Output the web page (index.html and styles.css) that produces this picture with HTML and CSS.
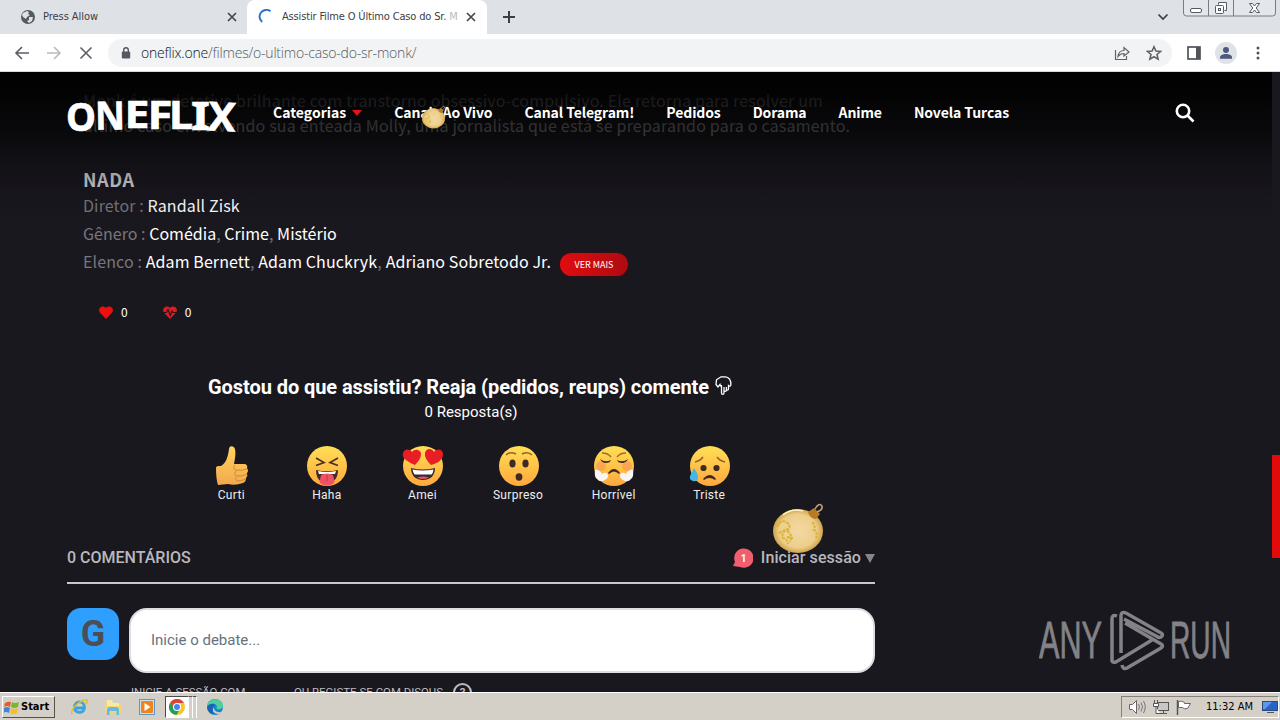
FILE: index.html
```html
<!DOCTYPE html>
<html lang="pt">
<head>
<meta charset="utf-8">
<title>Assistir Filme O Último Caso do Sr. Monk</title>
<link rel="stylesheet" href="styles.css">
</head>
<body>
<div class="screen">
  <div class="tabs">
    <div class="tab idle">
      <svg class="fav" viewBox="0 0 16 16"><circle cx="8" cy="8" r="7" fill="#555a60"/><path d="M3 4l4-2 2 1-1 2 2 1-3 2-1 2-3-2-1-2zM9 8h4l-1 4-3 2-2-2 2-1z" fill="#dee1e6"/></svg>
      <span class="tab-title press">Press Allow</span>
      <svg class="x" viewBox="0 0 10 10"><path d="M1 1l8 8M9 1L1 9"/></svg>
    </div>
    <div class="tab active">
      <svg class="fav spin" viewBox="0 0 16 16"><path d="M12.500 2.300A6.200 6.200 0 0 0 4.200 13" fill="none" stroke="#2f6fd0" stroke-width="2"/></svg>
      <span class="tab-title film">Assistir Filme O Último Caso do Sr. <i>M</i></span>
      <svg class="x" viewBox="0 0 10 10"><path d="M1 1l8 8M9 1L1 9"/></svg>
    </div>
    <svg class="plus" viewBox="0 0 12 12"><path d="M6 0v12M0 6h12"/></svg>
    <svg class="chev" viewBox="0 0 12 8"><path d="M1.500 1.500L6 6l4.500-4.500"/></svg>
    <svg class="winbtns" width="94" height="17" viewBox="0 0 94 17"><path d="M.5 0v13q0 3 3 3h86q3 0 3-3V0M25.500 0v16M50.500 0v16" fill="#e3e6eb" stroke="#777c85"/><rect x="7.500" y="8.500" width="11" height="4" rx="1.500" fill="#fff" stroke="#555a62"/><path d="M35.500 4.500v-2h8v8h-2" fill="#fff" stroke="#555a62"/><rect x="32.500" y="5.500" width="8" height="8" rx="1" fill="#fff" stroke="#555a62"/><rect x="35.500" y="8.500" width="2" height="2" fill="none" stroke="#555a62"/><path d="M66.500 3.500h3l2 2.500 2-2.500h3l-3.300 4.500 3.300 4.500h-3l-2-2.500-2 2.500h-3l3.300-4.500z" fill="#fff" stroke="#555a62"/></svg>
  </div>
  <div class="toolbar">
    <svg class="nav-ic" viewBox="0 0 16 16"><path d="M15 8H2M8 2L2 8l6 6" stroke="#5a5e63"/></svg>
    <svg class="nav-ic" viewBox="0 0 16 16"><path d="M1 8h13M8 2l6 6-6 6" stroke="#b9bbbe"/></svg>
    <svg class="nav-ic" viewBox="0 0 16 16"><path d="M2.500 2.500l11 11M13.500 2.500l-11 11" stroke="#5a5e63"/></svg>
    <div class="omni">
      <svg class="lock" viewBox="0 0 10 14"><path d="M2.700 6V4a2.300 2.300 0 0 1 4.600 0v2" fill="none" stroke="#55595f" stroke-width="1.400"/><rect x=".8" y="5.500" width="8.400" height="7" rx="1" fill="#55595f"/></svg>
      <span class="url"><b>oneflix.one</b>/filmes/o-ultimo-caso-do-sr-monk/</span>
      <svg class="share" viewBox="0 0 16 16"><path d="M1.500 5v9.500h11V11M4 11.500c.5-4 2.500-6 6-6V2.500l5 4.500-5 4V8.500c-3 0-4.500 1-6 3z"/></svg>
      <svg class="star" viewBox="0 0 16 16"><path d="M8 1.800l1.900 4.300 4.600.4-3.500 3 1.100 4.600L8 11.700l-4.100 2.400L5 9.500l-3.500-3 4.600-.4z"/></svg>
    </div>
    <svg class="panel" viewBox="0 0 14 14"><rect x="1" y="1" width="12" height="12" fill="none" stroke="#50535a" stroke-width="1.700"/><path d="M9 1h4v12H9z" fill="#50535a"/></svg>
    <svg class="user" viewBox="0 0 22 22"><circle cx="11" cy="11" r="11" fill="#dfe2e7"/><circle cx="11" cy="8" r="3" fill="#4b597b"/><path d="M5 16.800v-1.500c0-2 3-3.300 6-3.300s6 1.300 6 3.300v1.500z" fill="#4b597b"/></svg>
    <svg class="dots" viewBox="0 0 4 14"><circle cx="2" cy="2" r="1.500"/><circle cx="2" cy="7" r="1.500"/><circle cx="2" cy="12" r="1.500"/></svg>
  </div>

  <div class="page">
    <div class="details">
      <p class="desc"><span class="d1">Monk é um detetive brilhante com transtorno obsessivo-compulsivo. Ele retorna para resolver um</span><br><span class="d2">último caso envolvendo sua enteada Molly, uma jornalista que está se preparando para o casamento.</span></p>
      <div class="nada">NADA</div>
      <div class="meta m1">Diretor : <b>Randall Zisk</b></div>
      <div class="meta m2">Gênero : <b>Comédia</b>, <b>Crime</b>, <b>Mistério</b></div>
      <div class="meta m3"><span class="cast">Elenco : <b>Adam Bernett</b>, <b>Adam Chuckryk</b>, <b>Adriano Sobretodo Jr.</b></span><button class="more">VER MAIS</button></div>
      <div class="votes">
        <svg viewBox="0 0 14 13"><path d="M7 13L1 6.800C-2 3 3-2 7 2c4-4 9 1 6 4.800z" fill="#ee0f0f"/></svg><span>0</span>
        <svg class="second" viewBox="0 0 14 13"><path d="M7 13L1 6.800C-2 3 3-2 7 2c4-4 9 1 6 4.800z" fill="#e01b20"/><path d="M0 6.500h3.500L5 3.500l2.300 6L9 5l1 1.500h4" fill="none" stroke="#1a181f" stroke-width="1.100"/></svg><span>0</span>
      </div>
    </div>

    <div class="comments">
      <h3><span>Gostou do que assistiu? Reaja (pedidos, reups) comente</span><svg viewBox="0 0 18 20"><path d="M7.500 10v8q0 1.300 1.200 1.300t1.300-1.300V12m0 0v3.300q0 1 1.200 1t1.200-1V12m0 2.800q2.100.8 2.100-1V10.500q2 1.500 2.300-.500c.5-5-2-8.200-5.500-8.200H7L2.500 4.800 2 9.500l2 2.500L6 9.500q.500 2 1.500 2"/></svg></h3>
      <div class="resp">0 Resposta(s)</div>
      <div class="reactions">
        <div class="re"><svg viewBox="0 0 40 40"><defs><linearGradient id="y" x2="0" y2="1"><stop stop-color="#ffdf57"/><stop offset="1" stop-color="#ffa83c"/></linearGradient><linearGradient id="t" x2="0" y2="1"><stop stop-color="#ffd45e"/><stop offset="1" stop-color="#f2a94d"/></linearGradient></defs><path d="M4 22c0-2 2-2 5-2 5-3 7-9 8-17 .5-4 5-3 6 0 1 5 0 9-1 15h11q3 1 2 4 2 3 0 5 1 3-1 5 0 4-3 5-8 3-15 1l-10 1q-2-6-2-17z" fill="url(#t)"/><path d="M23 19q-3 2 0 5 7 1 12-1M24 25q-3 3 0 5 6 1 11-2M24 31q-1 3 1 4 5 0 9-2" fill="none" stroke="#c98534" stroke-width=".9"/></svg><span>Curti</span></div>
        <div class="re"><svg viewBox="0 0 40 40"><circle cx="20" cy="20" r="20" fill="url(#y)"/><path d="M9 12l8 4.500-8 3M31 12l-8 4.500 8 3" fill="none" stroke="#4b3022" stroke-width="1.700"/><path d="M9 24q11 2.500 22 0c0 8-4 13-11 13S9 32 9 24z" fill="#442b2b"/><path d="M11 25q9 2 18 0l-1 3H12z" fill="#fff"/><path d="M14 29q6-3 12 0l1.500 7c-2 4.500-13 4.500-15 0z" fill="#ef5262"/><path d="M20 29v6" stroke="#bb3448"/></svg><span>Haha</span></div>
        <div class="re"><svg viewBox="0 0 40 40"><circle cx="20" cy="20" r="20" fill="url(#y)"/><path d="M12 19Q0 14-.300 9C0 3 6 2 9 6c3-4 9-2 9 2s-3 8-6 11zM28 19q-7-7-6-12c1-5 7-5 9-1 3-4 9-3 9 2 0 6-5 9-12 11z" fill="#e81d25"/><path d="M8 22q12 3 24 0c0 7-4 12-12 12S8 29 8 22z" fill="#3a282c"/><path d="M9.500 23.500q10 2 21 0-.5 4-2 5h-17q-1.500-2-2-5z" fill="#fff"/><path d="M14 31.500q6-2 12 0-6 3-12 0z" fill="#e35468"/></svg><span>Amei</span></div>
        <div class="re"><svg viewBox="0 0 40 40"><circle cx="20" cy="20" r="20" fill="url(#y)"/><path d="M7 9q4-4 10-1M23 8q6-3 10 1" fill="none" stroke="#96602d" stroke-width="1.500"/><ellipse cx="13.500" cy="17.500" rx="3.100" ry="4" fill="#3d2b24"/><ellipse cx="26.500" cy="17.500" rx="3.100" ry="4" fill="#3d2b24"/><ellipse cx="20" cy="31" rx="3.400" ry="3.700" fill="#3d2b24"/></svg><span>Surpreso</span></div>
        <div class="re"><svg viewBox="0 0 40 40"><circle cx="20" cy="20" r="20" fill="url(#y)"/><circle cx="7" cy="20" r="5" fill="#f59255" opacity=".6"/><circle cx="33" cy="20" r="5" fill="#f59255" opacity=".6"/><path d="M8 7q6 0 9 4M32 7q-6 0-9 4" fill="none" stroke="#a36a2a" stroke-width="1.400"/><path d="M6 13q5 4 11 1-1 3-5 3t-6-4M34 13q-5 4-11 1 1 3 5 3t6-4" fill="#3d2b24"/><path d="M14 27q6-8 12 0l-1 1q-5-5-10 0z" fill="#3d2b24"/><path d="M13 27q-3-1-5 1-3-5-7-4-1 7 2 9 3 4 8 1 5-3 2-7zM27 27q3-1 5 1 3-5 7-4 1 7-2 9-3 4-8 1-5-3-2-7z" fill="#f8f5f4"/></svg><span>Horrível</span></div>
        <div class="re"><svg viewBox="0 0 40 40"><circle cx="20" cy="20" r="20" fill="url(#y)"/><path d="M5 16q5-1 8-5M35 16q-5-1-8-5" fill="none" stroke="#96602d" stroke-width="1.500"/><circle cx="13.500" cy="22" r="3.100" fill="#3d2b24"/><circle cx="26.500" cy="22" r="3.100" fill="#3d2b24"/><path d="M13 33q7-8 13 0l-1 1q-6-4-11 0z" fill="#3d2b24"/><path d="M4 22q5 7 4 10-1 4-5 3-4-1-3-5z" fill="#48b5e8"/></svg><span>Triste</span></div>
      </div>
      <div class="bar">
        <span class="count">0 COMENTÁRIOS</span>
        <svg class="bubble" viewBox="0 0 20 20"><path d="M0 18l2-4A9.700 9.700 0 1 1 7 19z" fill="#f05f70"/><text x="10.500" y="13.500" text-anchor="middle">1</text></svg>
        <span class="login">Iniciar sessão</span><i class="tri"></i>
      </div>
      <div class="compose"><div class="avatar">G</div><div class="field">Inicie o debate...</div></div>
      <div class="signin"><span class="s1">INICIE A SESSÃO COM</span><span class="s2">OU REGISTE-SE COM DISQUS</span><span class="q">?</span></div>
    </div>

    <div class="site-head">
      <svg class="logo" width="170" height="40" viewBox="0 0 170 40"><text x="-1" y="35" textLength="30" lengthAdjust="spacingAndGlyphs" font-size="40">O</text><text x="28" y="33.500" textLength="30" lengthAdjust="spacingAndGlyphs" font-size="39" transform="rotate(-1 43 20)">N</text><text x="57.500" y="32" textLength="25" lengthAdjust="spacingAndGlyphs" font-size="38">E</text><text x="80.500" y="32.500" textLength="25" lengthAdjust="spacingAndGlyphs" font-size="39">F</text><text x="102" y="32.500" textLength="24" lengthAdjust="spacingAndGlyphs" font-size="39">L</text><text x="124" y="33.500" textLength="19" lengthAdjust="spacingAndGlyphs" font-size="39">I</text><text x="141" y="35" textLength="28" lengthAdjust="spacingAndGlyphs" font-size="40" transform="rotate(3 155 20)">X</text></svg>
      <nav><a class="cat">Categorias<i></i></a><a>Canais Ao Vivo</a><a>Canal Telegram!</a><a>Pedidos</a><a>Dorama</a><a>Anime</a><a>Novela Turcas</a></nav>
      <svg class="search" viewBox="0 0 20 20"><circle cx="8" cy="8" r="6.200"/><path d="M12.500 12.500L18.500 18.500"/></svg>
    </div>

    <svg class="orn small" viewBox="0 0 50 50"><use href="#ball"/></svg>
    <svg class="orn big" viewBox="0 0 50 50"><defs><radialGradient id="g"><stop stop-color="#f2d8a4"/><stop offset=".75" stop-color="#edcf8b"/><stop offset="1" stop-color="#cfa24c"/></radialGradient></defs><g id="ball"><ellipse cx="25" cy="27" rx="25" ry="22" fill="url(#g)"/><path d="M4 23q4-8 9-5t3 7q-6 1-7 8m5-6q6 3 3 11M9 34q5 0 6 6M39 18q4 3 2 8 4 1 2 8M6 29l8-4m0 8l6 1" fill="none" stroke="#d9b536" stroke-width="2" stroke-dasharray="3 1"/><path d="M10 11Q19 4 30 7" fill="none" stroke="#fff1bd" stroke-width="1.500"/><path d="M35 8l6-4 6 6-4 5q-6 0-8-7z" fill="#b77b24"/><path d="M42 5q4-7 7-3 1 4-5 6" fill="none" stroke="#bfa577" stroke-width="1.500"/></g></svg>

    <svg class="watermark" width="194" height="64" viewBox="0 0 194 64"><text x="0" y="49" textLength="63" lengthAdjust="spacingAndGlyphs">ANY</text><text x="131" y="49" textLength="61" lengthAdjust="spacingAndGlyphs">RUN</text><path d="M78 7q-5-2-5 3v42q1 2 4 1l36-22M82 44V7q0-5 5-3l35 20q3 2 0 4-2 1-4-.500L85 10M83 56q1 5 5 3l34-20q3-2 0-4L86 14"/></svg>
    <i class="scroll"></i>
  </div>

  <div class="taskbar">
    <div class="start"><svg viewBox="0 0 16 16"><path d="M1 4q3-2 6-1L6 8Q3 6 0 8z" fill="#e45b2c"/><path d="M8 3q3 2 7 0l-1 5q-4 2-7 0z" fill="#77b82d"/><path d="M0 9q3-2 6 0l-1 5q-3-2-6 0z" fill="#3b86d8"/><path d="M7 9q3 2 7 0l-1 5q-4 2-7 0z" fill="#f6bd28"/></svg><b>Start</b></div>
    <svg class="app ie" viewBox="0 0 18 18"><path d="M4.500 10h10c0-8-10-8-10-.500 0 6 8 6 9.500 2" fill="none" stroke="#3ba3de" stroke-width="2.800"/><path d="M2 16C0 11 11 1 17 2q1 2-2 5" fill="none" stroke="#e3bd31" stroke-width="1.500"/></svg>
    <svg class="app folder" viewBox="0 0 18 18"><path d="M1 3h6l1 2h9v10H1z" fill="#f1d679"/><path d="M3 2h5l1 3h6v3H3z" fill="#f9e9a6"/><path d="M3 17v-5q0-3 3-3h6q3 0 3 3v5h-2.500v-4h-7v4z" fill="#68b9dd"/></svg>
    <svg class="app media" viewBox="0 0 18 18"><rect x="1.500" y="1.500" width="15" height="15" fill="#cce2f2" stroke="#5c97c9"/><rect x="3" y="3" width="12" height="12" rx="1" fill="#ef8519"/><path d="M6.500 5l6 4-6 4z" fill="#fff"/></svg>
    <div class="chrome"><svg viewBox="0 0 16 16"><circle cx="8" cy="8" r="8" fill="#f7c62d"/><path d="M1 4a8 8 0 0 1 14 0H8L5 9z" fill="#db4437"/><path d="M1 4a8 8 0 0 0 6.500 12L11 9.700 5 9z" fill="#279c55"/><circle cx="8" cy="8" r="4" fill="#fff"/><circle cx="8" cy="8" r="3" fill="#4285f4"/></svg></div><i class="stack"></i><i class="stack"></i>
    <svg class="app edge" viewBox="0 0 18 18"><circle cx="9" cy="9" r="8" fill="#1686d0"/><path d="M1 8C2-1 17-1 17 8q-1 4-6 3-1-1 0-2-1-4-5-3-3 0-5 2z" fill="#4fcf9c"/><path d="M7 9q-2 6 5 7 3 0 4-2-6 1-8-3z" fill="#d6cfc6"/><path d="M2 8q4-4 7-1-4 3-1 9Q2 16 1 9z" fill="#1b63b4"/></svg>
    <div class="tray">
      <svg viewBox="0 0 18 16"><path d="M1.500 5.500h3l4-4v13l-4-4h-3z" fill="#fff" stroke="#666"/><path d="M10.500 5q2 3 0 6M13 3.500q3 4.500 0 9M15.500 2q3.500 6 0 12" fill="none" stroke="#777"/></svg>
      <svg class="net" viewBox="0 0 18 16"><rect x="5.500" y="3.500" width="11" height="8" fill="#c7c7c7" stroke="#555"/><path d="M8 14.500h7M11.500 12v2M2.500 1v3m3-3v3M1.500 4.500h5v3h-5zM4 8v6.500h4" fill="#fff" stroke="#555"/></svg>
      <svg class="flag" viewBox="0 0 18 16"><path d="M2.500 1v15" stroke="#555" stroke-width="1.500"/><path d="M3.500 2.500q3-1 6 1v1h6l-3 5q-4 1-5-1H3.500z" fill="#fff" stroke="#666"/></svg>
      <span>11:32 AM</span>
      <svg class="mon" viewBox="0 0 16 16"><rect x=".5" y="2.500" width="15" height="9" fill="#2864c7" stroke="#294b86"/><path d="M1 3h9L3 10H1z" fill="#5e99e6"/><path d="M5 13.500h7" stroke="#555"/></svg>
    </div>
  </div>
</div>
</body>
</html>
```
FILE: styles.css
```css
* { box-sizing: border-box; }
body { margin: 0; background: #1a181f; }
svg { flex: none; display: block; }
.screen { width: 1280px; height: 720px; display: flex; flex-direction: column; overflow: hidden; font-family: Roboto, sans-serif; }

.tabs { height: 34px; flex: none; background: #dee1e6; display: flex; align-items: center; font: 11px/14px "DejaVu Sans Condensed", "DejaVu Sans", sans-serif; font-stretch: condensed; color: #3c4043; }
.tab { display: flex; align-items: center; height: 34px; }
.idle { width: 247px; padding: 0 10px 0 20px; }
.active { width: 240px; padding: 0 11px 0 11px; background: #fff; border-radius: 8px 8px 0 0; }
.fav { width: 16px; height: 16px; }
.tab-title { margin-left: 7px; white-space: nowrap; flex: 1; overflow: hidden; }
.film { margin-left: 8px; letter-spacing: -.16px; }
.film i { font-style: normal; color: #bbb; }
.press { letter-spacing: -.05px; }
.x { width: 10px; height: 10px; fill: none; stroke: #45484d; stroke-width: 1.7; }
.plus { width: 12px; height: 12px; margin-left: 16px; stroke: #3c4043; stroke-width: 2; }
.chev { width: 12px; height: 8px; margin-left: auto; fill: none; stroke: #3c4043; stroke-width: 1.7; }
.winbtns { align-self: flex-start; margin: 0 3px 0 14px; }

.toolbar { height: 38px; flex: none; display: flex; align-items: center; background: #fff; border-bottom: 1px solid #d5d7da; padding: 0 20px 0 14px; }
.nav-ic { width: 16px; height: 16px; margin-right: 16px; fill: none; stroke-width: 1.6; }
.omni { width: 1064px; height: 28px; margin-left: -2px; border-radius: 14px; background: #f1f3f4; display: flex; align-items: center; padding: 0 10px 0 13px; }
.lock { width: 10px; height: 14px; }
.url { margin-left: 10px; font: 300 14px/20px "Open Sans", sans-serif; color: #55595f; letter-spacing: -.2px; flex: 1; }
.url b { font-weight: 300; color: #101214; }
.share, .star { width: 16px; height: 16px; fill: none; stroke: #5f6368; stroke-width: 1.2; }
.star { margin-left: 16px; stroke-width: 1.6; }
.panel { width: 14px; height: 14px; margin-left: 15px; }
.user { width: 22px; height: 22px; margin-left: 14px; }
.dots { width: 4px; height: 14px; margin-left: auto; fill: #50535a; }

.page { position: relative; height: 620px; flex: none; overflow: hidden; background: #1a181f; }
.details { height: 284px; padding: 16px 0 0 83px; color: #77767c; font-family: "Noto Sans CJK JP", sans-serif; white-space: nowrap; }
.desc { margin: 0; font-size: 16px; line-height: 25px; color: #98979d; }
.d1 { letter-spacing: .18px; }
.d2 { letter-spacing: .19px; }
.nada { margin-top: 28px; font-size: 18px; font-weight: 700; line-height: 26px; letter-spacing: .6px; color: #d6d5d9; }
.meta { height: 28px; font-size: 16px; line-height: 28px; letter-spacing: .11px; display: flex; white-space: pre; }
.nada + .meta { margin-top: -1px; }
.m2 { letter-spacing: .03px; }
.meta b { font-weight: 400; color: #fff; }
.more { width: 68px; height: 23px; margin: 6px 0 0 9px; padding: 0; border: 0; border-radius: 12px; background: linear-gradient(90deg, #e00c10, #ad0b10); color: #fff; font: 9px/22px "Noto Sans CJK JP", sans-serif; box-shadow: 0 0 3px #500a10; }
.votes { display: flex; align-items: center; margin: 27px 0 0 16px; height: 20px; font: 12px/20px "Noto Sans CJK JP", sans-serif; color: #fff; }
.votes svg { width: 14px; height: 13px; margin-right: 8px; }
.votes .second { margin-left: 35px; }

.comments { width: 808px; margin-left: 67px; color: #fff; }
h3 { margin: 0; padding: 20px 2px 0 0; height: 45px; display: flex; justify-content: center; font: 700 20px/23px Roboto, sans-serif; letter-spacing: -.07px; }
h3 svg { width: 18px; height: 20px; margin: -1px 0 0 5px; fill: none; stroke: #fff; stroke-width: 1.3; }
.resp { height: 22px; font-size: 15px; line-height: 22px; text-align: center; }
.reactions { display: flex; margin: 23px 0 0 117px; }
.re { width: 95.6px; display: flex; flex-direction: column; align-items: center; font-size: 12px; line-height: 18px; letter-spacing: .3px; color: #eee; }
.re svg { width: 40px; height: 40px; overflow: visible; }
.re span { margin-right: 1px; }
.bar { display: flex; align-items: center; height: 54px; margin-top: 26px; padding-top: 4px; border-bottom: 2px solid #c9c8cc; color: #b9b8bc; font: 500 16px/24px Roboto, sans-serif; }
.bubble { width: 20px; height: 20px; margin: -1px 0 0 auto; }
.bubble text { font: 700 10px Roboto, sans-serif; fill: #fff; }
.login { margin-left: 8px; letter-spacing: .07px; }
.tri { margin-left: 4px; border: 5px solid transparent; border-top: 9px solid #86858b; border-bottom: 0; }
.compose { display: flex; margin-top: 24px; }
.avatar { width: 52px; height: 52px; border-radius: 14px; background: #2e9fff; color: #4b4f55; font: 700 36px/52px Roboto, sans-serif; text-align: center; }
.field { width: 746px; height: 65px; margin-left: 10px; border: 2px solid #dbdfe4; border-radius: 18px; background: #fff; color: #66727d; font-size: 15px; line-height: 60px; padding-left: 20px; }
.signin { display: flex; margin: 10px 0 0 64px; height: 20px; font-size: 11.4px; line-height: 18px; color: #bbbabe; white-space: nowrap; }
.s1 { width: 163px; }
.q { width: 19px; height: 19px; margin-left: 10px; border: 2px solid #bbbabe; border-radius: 50%; text-align: center; line-height: 15px; font-weight: 700; }

.site-head { position: absolute; left: 0; top: 0; width: 1272px; height: 150px; display: flex; align-items: flex-start; padding: 24px 0 0 67px; background: linear-gradient(#000 0%, rgba(0,0,0,.82) 20%, rgba(0,0,0,.65) 40%, rgba(0,0,0,.32) 60%, rgba(0,0,0,.12) 80%, transparent 100%); }
.logo { overflow: visible; font: 700 39px "Noto Sans", sans-serif; fill: #fff; stroke: #fff; stroke-width: .6; }
nav { display: flex; margin: 4px 0 0 36px; color: #fff; font: 700 14px/24px "Noto Sans CJK JP", sans-serif; letter-spacing: -.1px; white-space: nowrap; }
nav a { margin-right: 32px; }
nav .cat { letter-spacing: 0; }
.cat i { display: inline-block; margin-left: 6px; vertical-align: 2px; border: 5px solid transparent; border-top: 6px solid #e3131a; border-bottom: 0; }
.search { width: 20px; height: 20px; margin: 7px 77px 0 auto; fill: none; stroke: #fff; stroke-width: 2.6; }
.orn { position: absolute; }
.small { left: 421px; top: 34px; width: 25px; height: 23px; }
.big { left: 773px; top: 432px; width: 50px; height: 50px; overflow: visible; }
.watermark { position: absolute; left: 1039px; top: 537px; fill: #838287; font: 52px "Liberation Sans", sans-serif; }
.watermark text { stroke: #838287; stroke-width: .8; }
.watermark path { fill: none; stroke: #838287; stroke-width: 3.5; }
.scroll { position: absolute; right: 0; top: 383px; width: 8px; height: 103px; background: #e20b0b; }

.taskbar { height: 28px; flex: none; display: flex; align-items: center; background: #d5d0c7; border-top: 1px solid #fff; font: 11px/16px "DejaVu Sans Condensed", sans-serif; color: #000; }
.start { width: 53px; height: 22px; margin-left: 2px; border: 1px solid; border-color: #fff #55524c #55524c #fff; display: flex; align-items: center; }
.start svg { width: 16px; height: 16px; margin-left: 1px; }
.start b { font-size: 11px; letter-spacing: 0; margin-left: 1px; }
.app { width: 18px; height: 18px; }
.ie { margin-left: 15px; }
.folder { margin-left: 16px; }
.media { margin-left: 16px; }
.chrome { width: 24px; height: 22px; margin-left: 9px; border: 1px solid; border-color: #4c4944 #fff #fff #4c4944; background: #fff; display: flex; align-items: center; justify-content: center; }
.chrome svg { width: 16px; height: 16px; }
.stack { width: 4px; height: 22px; border-right: 1px solid #fff; border-top: 1px solid #55524c; }
.edge { margin-left: 9px; }
.tray { width: 158px; height: 22px; margin: 0 1px 0 auto; border: 1px solid; border-color: #86827a #fff #fff #86827a; display: flex; align-items: center; padding-left: 6px; }
.tray svg { width: 18px; height: 16px; }
.tray .net { margin-left: 6px; }
.tray .flag { margin-left: 5px; }
.tray span { margin-left: 13px; white-space: nowrap; }
.tray .mon { width: 16px; height: 16px; margin-left: auto; }
```
